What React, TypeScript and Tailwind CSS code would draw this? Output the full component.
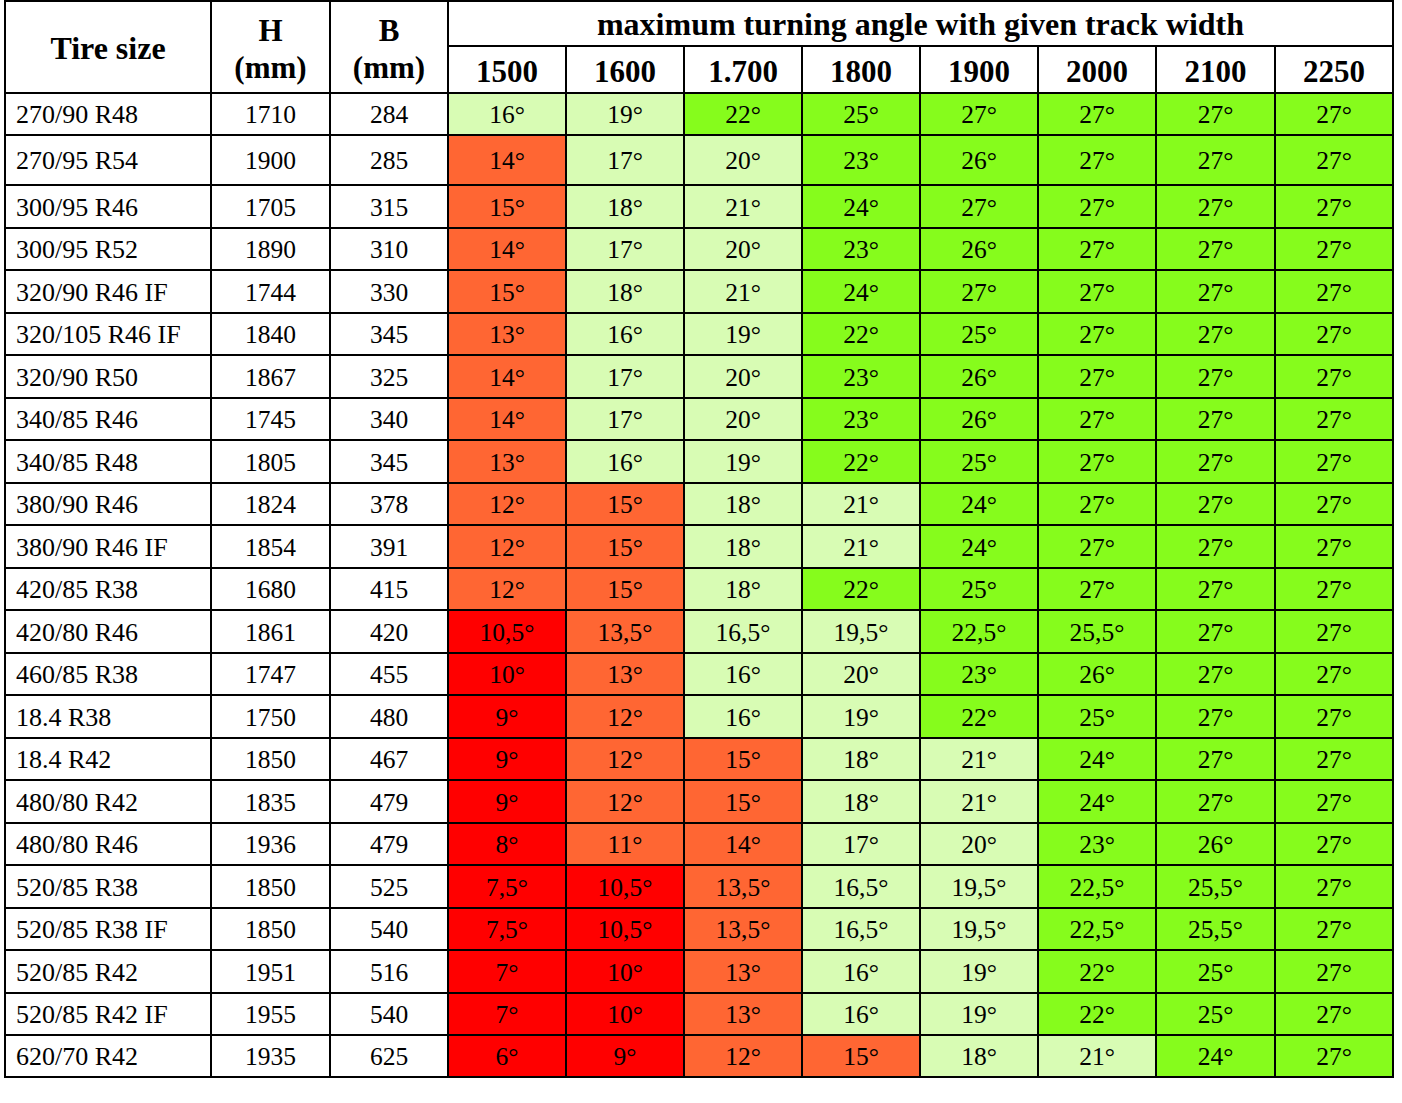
import React from "react";

type C = "R" | "O" | "L" | "G";

const colorClass: Record<C, string> = {
  R: "bg-[#ff0000]",
  O: "bg-[#ff6633]",
  L: "bg-[#d8fcb4]",
  G: "bg-[#86fc1c]",
};

const rows: [string, string, string, string][] = [
  ["270/90 R48", "1710", "284", "16 L|19 L|22 G|25 G|27 G|27 G|27 G|27 G"],
  ["270/95 R54", "1900", "285", "14 O|17 L|20 L|23 G|26 G|27 G|27 G|27 G"],
  ["300/95 R46", "1705", "315", "15 O|18 L|21 L|24 G|27 G|27 G|27 G|27 G"],
  ["300/95 R52", "1890", "310", "14 O|17 L|20 L|23 G|26 G|27 G|27 G|27 G"],
  ["320/90 R46 IF", "1744", "330", "15 O|18 L|21 L|24 G|27 G|27 G|27 G|27 G"],
  ["320/105 R46 IF", "1840", "345", "13 O|16 L|19 L|22 G|25 G|27 G|27 G|27 G"],
  ["320/90 R50", "1867", "325", "14 O|17 L|20 L|23 G|26 G|27 G|27 G|27 G"],
  ["340/85 R46", "1745", "340", "14 O|17 L|20 L|23 G|26 G|27 G|27 G|27 G"],
  ["340/85 R48", "1805", "345", "13 O|16 L|19 L|22 G|25 G|27 G|27 G|27 G"],
  ["380/90 R46", "1824", "378", "12 O|15 O|18 L|21 L|24 G|27 G|27 G|27 G"],
  ["380/90 R46 IF", "1854", "391", "12 O|15 O|18 L|21 L|24 G|27 G|27 G|27 G"],
  ["420/85 R38", "1680", "415", "12 O|15 O|18 L|22 G|25 G|27 G|27 G|27 G"],
  ["420/80 R46", "1861", "420", "10,5 R|13,5 O|16,5 L|19,5 L|22,5 G|25,5 G|27 G|27 G"],
  ["460/85 R38", "1747", "455", "10 R|13 O|16 L|20 L|23 G|26 G|27 G|27 G"],
  ["18.4 R38", "1750", "480", "9 R|12 O|16 L|19 L|22 G|25 G|27 G|27 G"],
  ["18.4 R42", "1850", "467", "9 R|12 O|15 O|18 L|21 L|24 G|27 G|27 G"],
  ["480/80 R42", "1835", "479", "9 R|12 O|15 O|18 L|21 L|24 G|27 G|27 G"],
  ["480/80 R46", "1936", "479", "8 R|11 O|14 O|17 L|20 L|23 G|26 G|27 G"],
  ["520/85 R38", "1850", "525", "7,5 R|10,5 R|13,5 O|16,5 L|19,5 L|22,5 G|25,5 G|27 G"],
  ["520/85 R38 IF", "1850", "540", "7,5 R|10,5 R|13,5 O|16,5 L|19,5 L|22,5 G|25,5 G|27 G"],
  ["520/85 R42", "1951", "516", "7 R|10 R|13 O|16 L|19 L|22 G|25 G|27 G"],
  ["520/85 R42 IF", "1955", "540", "7 R|10 R|13 O|16 L|19 L|22 G|25 G|27 G"],
  ["620/70 R42", "1935", "625", "6 R|9 R|12 O|15 O|18 L|21 L|24 G|27 G"],
];

const widths = ["1500", "1600", "1.700", "1800", "1900", "2000", "2100", "2250"];

export default function App() {
  return (
    <div
      className="w-[1402px] h-[1103px] bg-white text-black"
      style={{ fontFamily: '"Liberation Serif", "Times New Roman", serif' }}
    >
      <div className="ml-[4px] w-fit grid bg-black p-[2px] gap-[2px] grid-cols-[204px_117px_116px_116px_116px_116px_116px_116px_116px_117px_116px] grid-rows-[43px_45px_40px_48px_41px_40px_41px_40px_41px_40px_41px_40px_41px_40px_41px_40px_41px_40px_41px_40px_41px_40px_41px_40px_40px]">
        <div className="row-span-2 bg-white flex items-center justify-center font-bold text-[32px] leading-none pt-[2px]">
          Tire size
        </div>
        <div className="row-span-2 bg-white flex flex-col items-center justify-center font-bold text-[31px] leading-[37px] pt-[3px]">
          <span>H</span>
          <span>(mm)</span>
        </div>
        <div className="row-span-2 bg-white flex flex-col items-center justify-center font-bold text-[31px] leading-[37px] pt-[3px]">
          <span>B</span>
          <span>(mm)</span>
        </div>
        <div className="col-span-8 bg-white flex items-center justify-center font-bold text-[32px] leading-none pt-[1px]">
          maximum turning angle with given track width
        </div>
        {widths.map((w) => (
          <div
            key={w}
            className="bg-white flex items-center justify-center font-bold text-[31px] leading-none pt-[3px]"
          >
            {w}
          </div>
        ))}
        {rows.map(([size, h, b, vals]) => (
          <React.Fragment key={size + h}>
            <div className="bg-white flex items-center pl-[10px] text-[26px] leading-none pt-[2px]">
              {size}
            </div>
            <div className="bg-white flex items-center justify-center text-[25.5px] leading-none pt-[2px]">
              {h}
            </div>
            <div className="bg-white flex items-center justify-center text-[25.5px] leading-none pt-[2px]">
              {b}
            </div>
            {vals.split("|").map((v, i) => {
              const [num, c] = v.split(" ");
              return (
                <div
                  key={i}
                  className={`${colorClass[c as C]} flex items-center justify-center text-[25.5px] leading-none pt-[2px]`}
                >
                  {num}°
                </div>
              );
            })}
          </React.Fragment>
        ))}
      </div>
    </div>
  );
}
